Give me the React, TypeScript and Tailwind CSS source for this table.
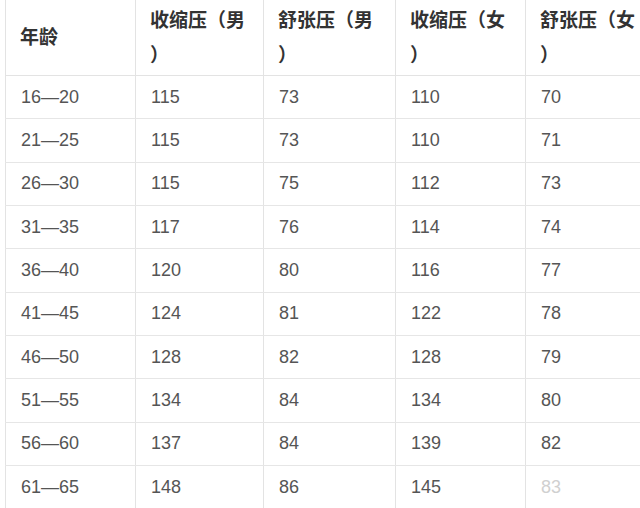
const headers: [string, string][] = [
  ['年龄', ''],
  ['收缩压（男', '）'],
  ['舒张压（男', '）'],
  ['收缩压（女', '）'],
  ['舒张压（女', '）'],
];

const rows: [string, string, string, string, string][] = [
  ['16—20', '115', '73', '110', '70'],
  ['21—25', '115', '73', '110', '71'],
  ['26—30', '115', '75', '112', '73'],
  ['31—35', '117', '76', '114', '74'],
  ['36—40', '120', '80', '116', '77'],
  ['41—45', '124', '81', '122', '78'],
  ['46—50', '128', '82', '128', '79'],
  ['51—55', '134', '84', '134', '80'],
  ['56—60', '137', '84', '139', '82'],
  ['61—65', '148', '86', '145', '83'],
];

const widths = ['w-[130px]', 'w-[128px]', 'w-[132px]', 'w-[130px]', 'flex-1'];

export default function App() {
  return (
    <div
      className="h-[508px] w-[640px] overflow-hidden bg-white pl-[5px]"
      style={{ fontFamily: '"Liberation Sans", Arial, "Noto Sans CJK SC", sans-serif' }}
    >
      {/* header */}
      <div className="flex h-[76px] border-b border-[#e3e3e3]">
        {headers.map(([a, b], i) => (
          <div
            key={a}
            className={`${widths[i]} flex items-center whitespace-nowrap border-l border-[#e3e3e3] pl-[14px] text-[19px] font-bold leading-[35px] text-[#333]`}
          >
            <span>
              {a}
              {b && (
                <>
                  <br />
                  {b}
                </>
              )}
            </span>
          </div>
        ))}
      </div>

      {/* body */}
      {rows.map((r, ri) => (
        <div key={ri} className="flex h-[43.33px] border-b border-[#e6e6e6]">
          {r.map((v, i) => (
            <div
              key={i}
              className={`${widths[i]} flex items-center border-l border-[#e3e3e3] pl-[15px] text-[18px] ${
                ri === rows.length - 1 && i === 4 ? 'text-[#d0d0d0]' : 'text-[#555]'
              }`}
            >
              {v}
            </div>
          ))}
        </div>
      ))}
    </div>
  );
}
